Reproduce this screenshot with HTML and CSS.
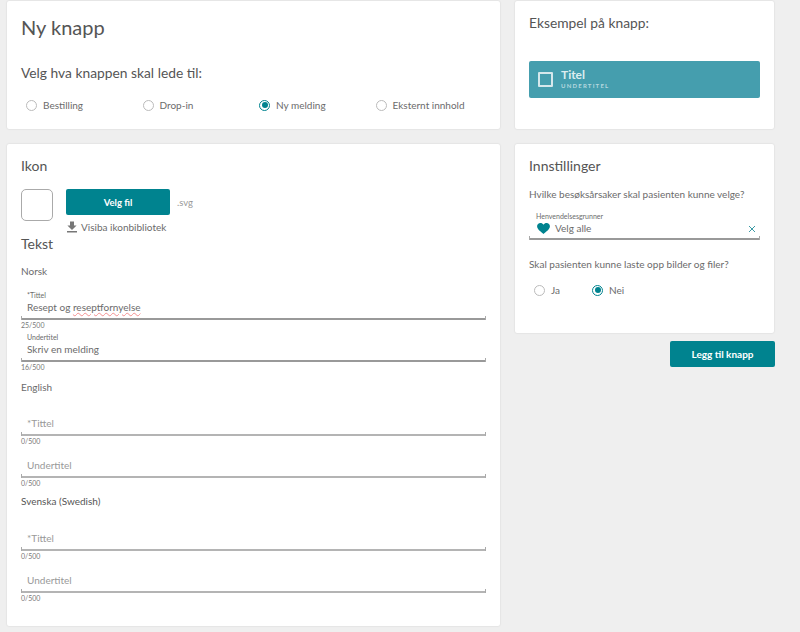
FILE: index.html
```html
<!DOCTYPE html>
<html lang="no">
<head>
<meta charset="utf-8">
<title>Ny knapp</title>
<link rel="stylesheet" href="styles.css">
</head>
<body>
<main class="page">
  <section class="card intro">
    <h1>Ny knapp</h1>
    <h2 class="lead">Velg hva knappen skal lede til:</h2>
    <div class="radios">
      <label class="radio"><span class="dot"></span>Bestilling</label>
      <label class="radio"><span class="dot"></span>Drop-in</label>
      <label class="radio"><span class="dot on"></span>Ny melding</label>
      <label class="radio"><span class="dot"></span>Eksternt innhold</label>
    </div>
  </section>
  <section class="card example">
    <h2 class="lead">Eksempel på knapp:</h2>
    <div class="preview">
      <span class="preview-box"></span>
      <span class="preview-text"><b>Titel</b><small>UNDERTITEL</small></span>
    </div>
  </section>
  <section class="card form">
    <h3>Ikon</h3>
    <div class="icon-row">
      <div class="icon-slot"></div>
      <div class="icon-actions">
        <div class="file-row"><button class="btn file-btn">Velg fil</button><span class="ext">.svg</span></div>
        <a class="lib"><svg width="12" height="12" viewBox="0 0 12 12"><path d="M4 0.5h4v4h2.6L6 9 1.400 4.500H4z M1 10h10v1.500H1z" fill="#777"/></svg>Visiba ikonbibliotek</a>
      </div>
    </div>
    <h3 class="tekst">Tekst</h3>
    <p class="lang first">Norsk</p>
    <div class="field filled"><span class="mini">*Tittel</span><span class="val">Resept og <u>reseptfornyelse</u></span><i class="line"></i><span class="count">25/500</span></div>
    <div class="field filled"><span class="mini">Undertitel</span><span class="val">Skriv en melding</span><i class="line"></i><span class="count">16/500</span></div>
    <p class="lang">English</p>
    <div class="field empty gap"><span class="val">*Tittel</span><i class="line"></i><span class="count">0/500</span></div>
    <div class="field empty"><span class="val">Undertitel</span><i class="line"></i><span class="count">0/500</span></div>
    <p class="lang sv">Svenska (Swedish)</p>
    <div class="field empty gap"><span class="val">*Tittel</span><i class="line"></i><span class="count">0/500</span></div>
    <div class="field empty"><span class="val">Undertitel</span><i class="line"></i><span class="count">0/500</span></div>
  </section>
  <aside class="side">
    <section class="card settings">
      <h3>Innstillinger</h3>
      <p class="q">Hvilke besøksårsaker skal pasienten kunne velge?</p>
      <div class="select">
        <span class="mini">Henvendelsesgrunner</span>
        <div class="select-val">
          <svg width="13" height="11" viewBox="0 0 14 12"><path d="M7 12C5 10 0 7 0 3.500 0 1.500 1.600 0 3.600 0 5 0 6.300 .7 7 2 7.700 .7 9 0 10.400 0 12.400 0 14 1.500 14 3.500 14 7 9 10 7 12z" fill="#00838f"/></svg>
          <span>Velg alle</span>
          <svg class="x" width="8" height="8" viewBox="0 0 8 8"><path d="M1 1l6 6M7 1L1 7" stroke="#3c9aa5" stroke-width="1" fill="none"/></svg>
        </div>
        <i class="line"></i>
      </div>
      <p class="q q2">Skal pasienten kunne laste opp bilder og filer?</p>
      <div class="radios short">
        <label class="radio"><span class="dot"></span>Ja</label>
        <label class="radio"><span class="dot on"></span>Nei</label>
      </div>
    </section>
    <button class="btn add">Legg til knapp</button>
  </aside>
</main>
</body>
</html>
```
FILE: styles.css
```css
* { box-sizing: border-box; }
html, body { margin: 0; height: 100%; }
body {
  background: #efefef;
  font-family: "Lato", "Open Sans", sans-serif;
  color: #555;
  overflow: hidden;
}
.page {
  display: grid;
  grid-template-columns: 493px 259px;
  grid-template-rows: 128px auto;
  column-gap: 15px;
  row-gap: 15px;
  padding: 1px 0 0 7px;
  align-items: start;
}
.card {
  background: #fff;
  border-radius: 2px;
  box-shadow: 0 0 2px rgba(0, 0, 0, .14);
}
.intro, .example { height: 128px; }
h1, h2, h3, p { margin: 0; font-weight: 400; }
.intro { padding: 13px 14px 0; }
h1 { font-size: 20px; line-height: 26px; color: #555; }
.lead { font-size: 13.800px; line-height: 18px; color: #555; }
.intro .lead { margin-top: 24px; }
.radios { display: grid; grid-template-columns: repeat(4, 116.500px); margin-top: 16px; padding-left: 5px; }
.radio { display: flex; align-items: center; gap: 6px; font-size: 10px; line-height: 14px; color: #6b6b6b; }
.dot { width: 11px; height: 11px; border: 1px solid #bbb; border-radius: 50%; background: #fff; flex: none; }
.dot.on { border: 1.500px solid #00838f; position: relative; }
.dot.on::after { content: ""; position: absolute; inset: 1.500px; border-radius: 50%; background: #00838f; }
.example { padding: 13px 14px 0; }
.preview {
  display: flex;
  align-items: center;
  gap: 8px;
  height: 37px;
  margin-top: 29px;
  padding: 0 0 1px 9px;
  background: #459eae;
  border-radius: 2px;
  color: #fff;
}
.preview-box { width: 15px; height: 15px; border: 2px solid #d5e8ec; border-radius: 1px; }
.preview-text { display: flex; flex-direction: column; color: #dcedf0; }
.preview-text b { font-size: 12px; line-height: 13px; }
.preview-text small { font-size: 6px; line-height: 9px; font-weight: 700; letter-spacing: 1.200px; color: #b5d8df; }
.form { height: 482px; padding: 13px 14px 0; }
h3 { font-size: 14px; line-height: 17px; color: #555; }
.icon-row { display: flex; gap: 13px; margin-top: 15px; }
.icon-slot { width: 32px; height: 32px; border: 1.500px solid #aaa; border-radius: 5px; }
.file-row { display: flex; align-items: center; gap: 7px; }
.btn {
  font: 700 9.500px "Lato", sans-serif;
  color: #fff;
  background: #00838f;
  border: 0;
  border-radius: 2px;
  padding: 0;
}
.file-btn { width: 104px; height: 26px; }
.ext { font-size: 9.500px; color: #999; }
.lib { display: flex; align-items: center; gap: 3px; margin-top: 5px; font-size: 10px; line-height: 14px; color: #6b6b6b; }
.tekst { margin-top: 1px; }
.lang { font-size: 10px; line-height: 12px; color: #6b6b6b; margin-top: 6px; }
.lang.first { margin-top: 13px; }
.lang.sv { margin-top: 4px; color: #555; }
.field { position: relative; height: 42px; }
.lang.first + .field { margin-top: 14px; }
.gap { margin-top: 14px; }
.lang.sv + .gap { margin-top: 15px; }
.mini { position: absolute; left: 6px; top: 0; font-size: 7px; line-height: 9px; color: #6b6b6b; white-space: nowrap; }
.val { position: absolute; left: 6px; top: 9px; font-size: 10px; line-height: 14px; color: #6b6b6b; white-space: nowrap; }
.empty .val { color: #999; }
.val u { text-decoration: underline wavy #f49090 1px; text-underline-offset: 1px; }
.line { position: absolute; display: block; left: 0; right: 0; top: 27px; height: 2px; background: #b4b4b4; }
.line::before, .line::after { content: ""; position: absolute; bottom: 0; width: 1px; height: 4px; background: #aaa; }
.line::before { left: 0; }
.line::after { right: 0; }
.filled .line { background: #999; }
.count { position: absolute; left: 0; top: 30px; font-size: 7px; line-height: 9px; color: #777; }
.side { display: flex; flex-direction: column; align-items: stretch; }
.settings { height: 189px; padding: 13px 14px 0; width: 259px; }
.q { font-size: 10px; line-height: 14px; color: #6b6b6b; }
.settings .q { margin-top: 13px; }
.select { position: relative; height: 29px; margin-top: 11px; }
.select .mini { left: 7px; top: 0; }
.select-val { position: absolute; left: 8px; right: 4px; top: 9px; display: flex; align-items: center; gap: 5px; font-size: 10px; line-height: 14px; color: #6b6b6b; }
.select-val .x { margin-left: auto; margin-top: 2px; }
.select .line { top: 26px; background: #999; }
.settings .q2 { margin-top: 16px; }
.short { grid-template-columns: 58px 60px; margin-top: 12px; }
.add { flex: none; width: 105px; height: 26px; margin: 8px 0 0 155px; font-size: 10px; }
```
